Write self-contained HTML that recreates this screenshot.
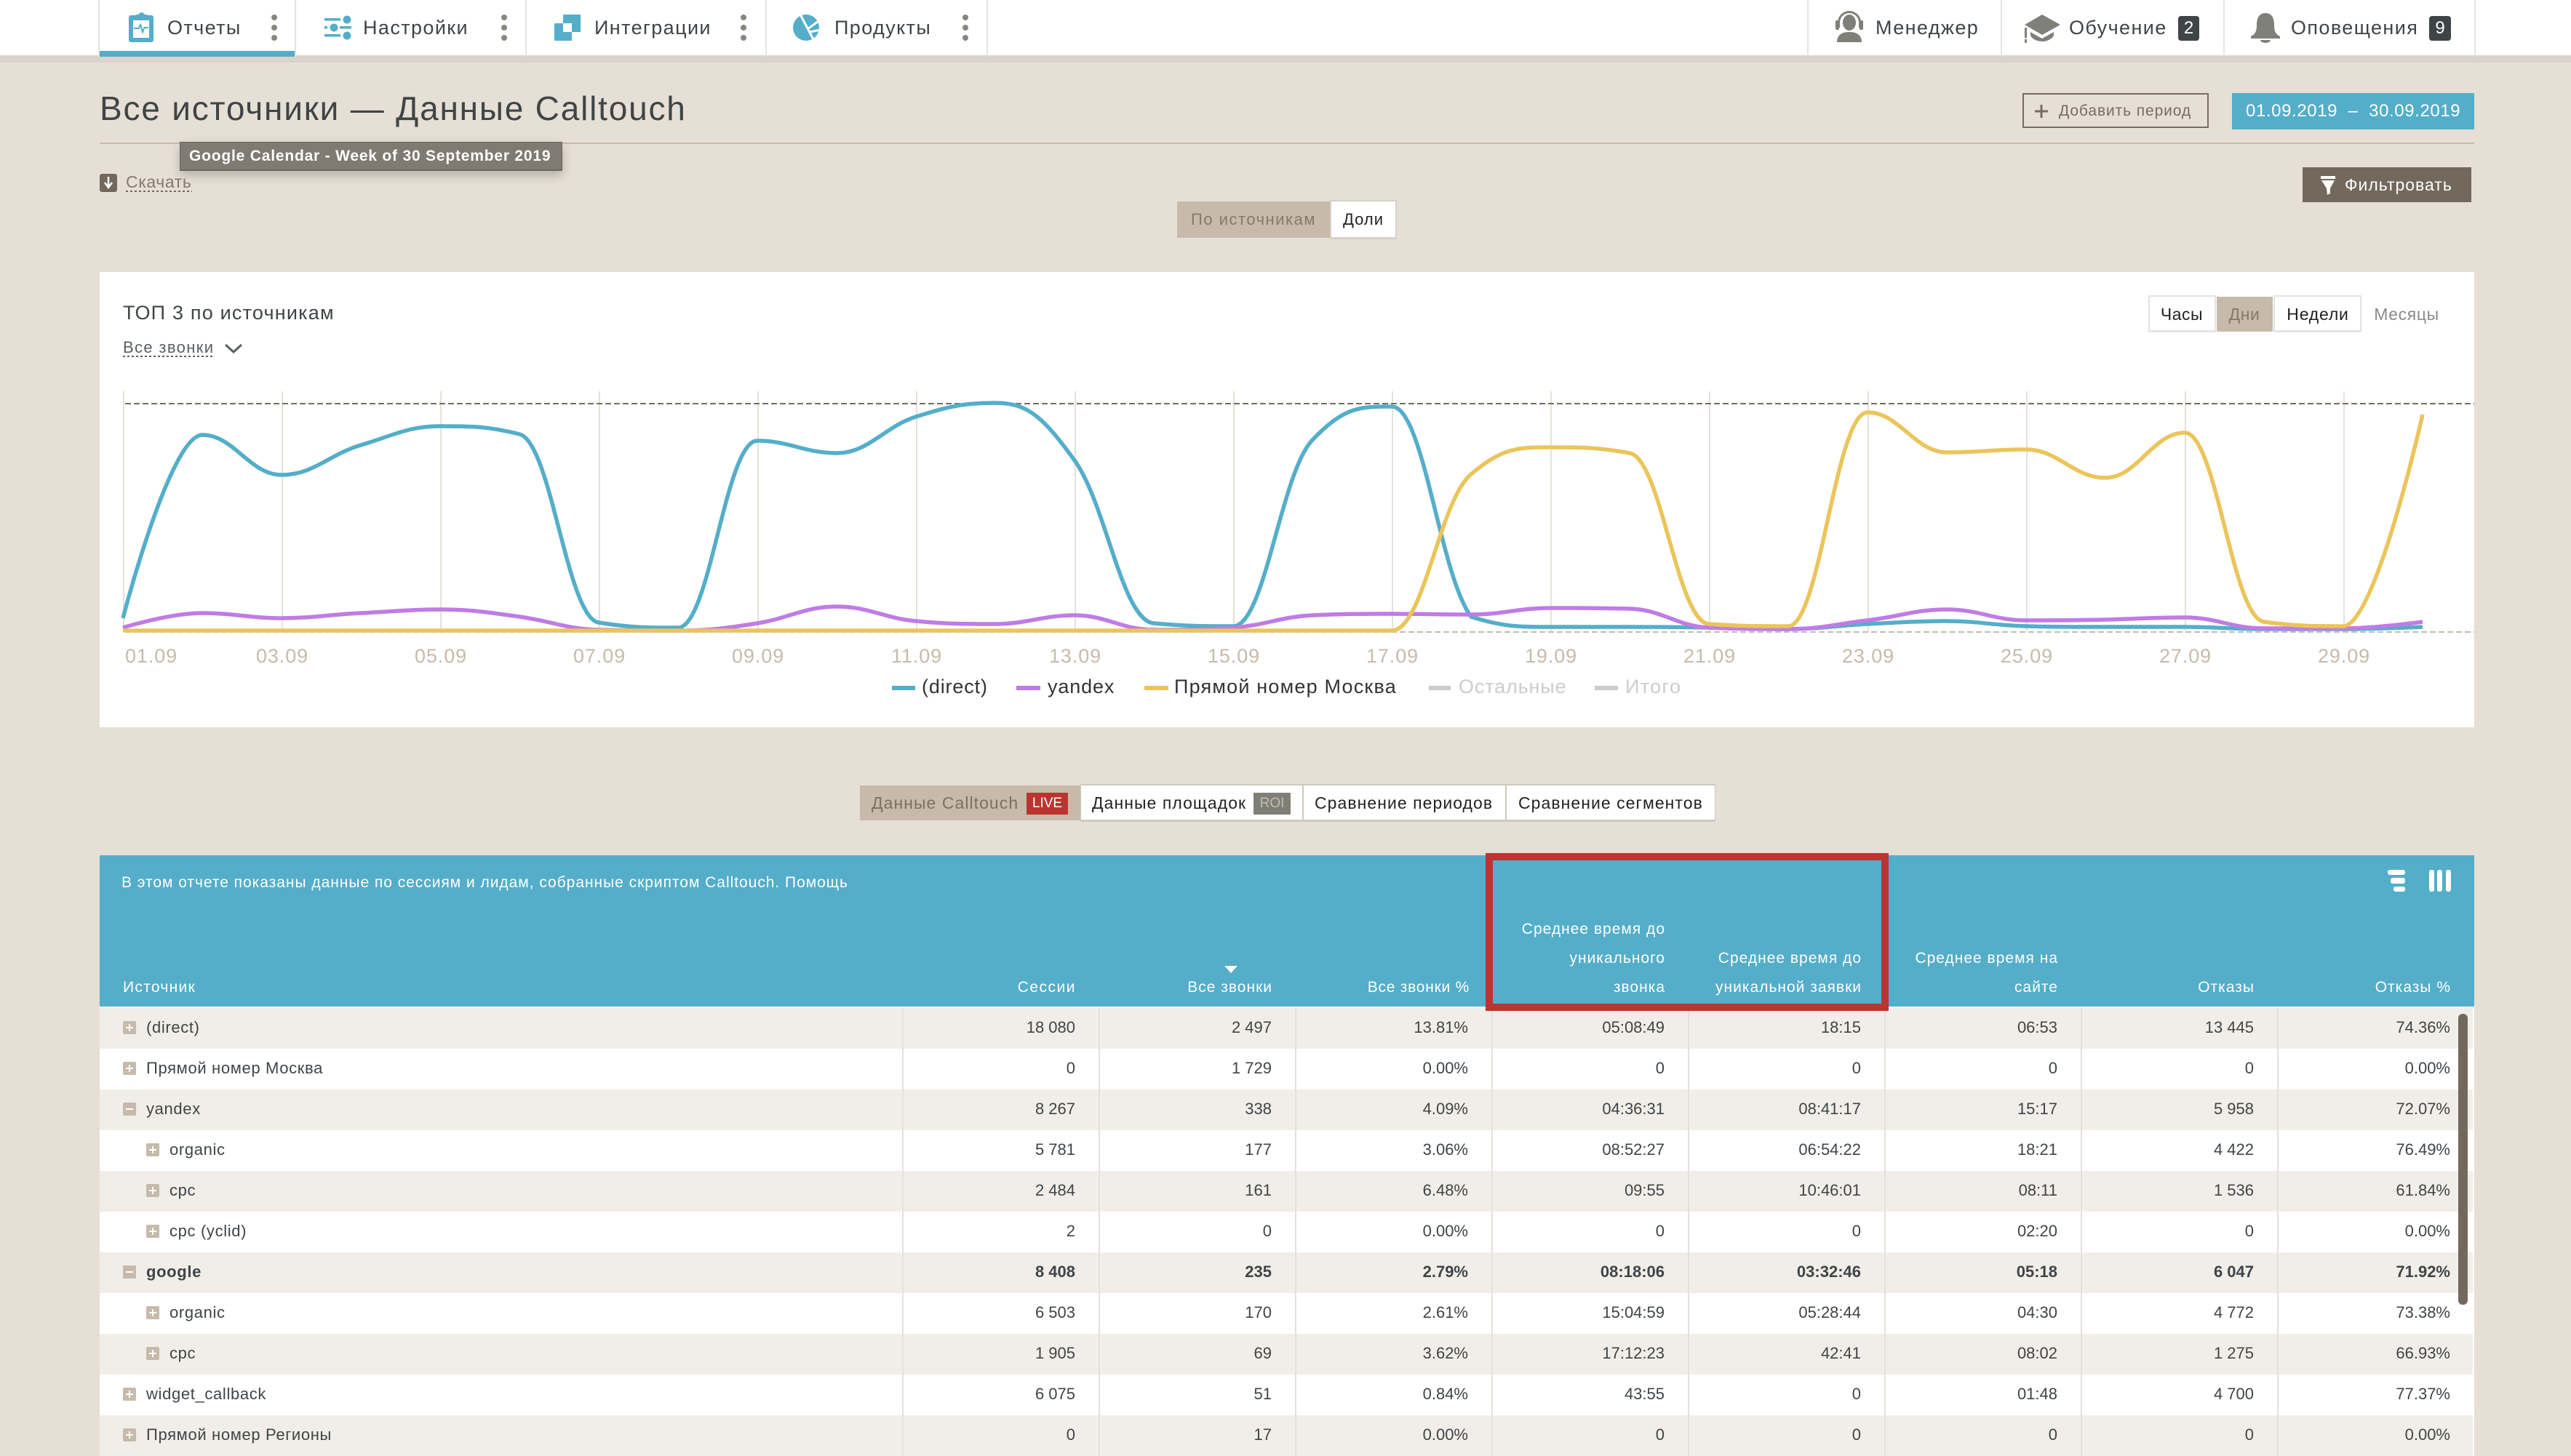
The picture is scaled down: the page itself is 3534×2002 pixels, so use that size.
<!DOCTYPE html>
<html lang="ru"><head><meta charset="utf-8"><title>Все источники — Данные Calltouch</title>
<style>
*{box-sizing:border-box}
html,body{margin:0;padding:0;width:3534px;height:2002px;overflow:hidden;background:#e6dfd5;font-family:"Liberation Sans","Noto Sans CJK SC",sans-serif;color:#3f4447}
.b{position:absolute}
.t{position:absolute;white-space:nowrap;height:40px;line-height:40px}
.r{text-align:right}
.c{text-align:center;transform:translateX(-50%)}
.nav{font-size:27px;letter-spacing:1.4px}
.ax{font-size:27px;color:#c7baaa;top:882px;letter-spacing:.9px}
.lg{font-size:27px;color:#333;top:924px;letter-spacing:.85px}
.h{font-size:21px;color:#fff;letter-spacing:1px}
.tb{font-size:23px;letter-spacing:1.05px}
.row{position:absolute;left:137px;width:3262px;height:56px;display:flex;font-size:22px;line-height:54px;background:#fff}
.row.o{background:#f1eee9}
.row.bd{font-weight:bold}
.row div{width:270px;text-align:right;padding-right:32px;border-left:2px solid #e5e1da}
.row div:last-child{width:269px;padding-right:31px}
.row div.n{width:1103px;border:0;padding:0 0 0 32px;text-align:left;display:flex;align-items:center}
.row div.n.s{padding-left:64px}
.row div.n b{font-weight:inherit;line-height:52px;letter-spacing:.65px;margin-top:-2px}
.row div.n i{display:block;width:18px;height:18px;background:#c7baaa;border-radius:2px;margin:-2px 14px 0 0;position:relative}
.row div.n i:before{content:"";position:absolute;left:4px;top:8px;width:10px;height:2px;background:#fff}
.row div.n i.p:after{content:"";position:absolute;left:8px;top:4px;width:2px;height:10px;background:#fff}
.tab{position:absolute;top:1078px;height:52px;background:#fff;border:2px solid #cfc9bf;border-bottom-width:3px;border-left-width:1px;border-right-width:1px}
</style></head><body>

<!-- nav -->
<div class="b" style="left:0;top:0;width:3534px;height:76px;background:#fff"></div>
<div class="b" style="left:0;top:76px;width:3534px;height:10px;background:#dad3cb"></div>
<div class="b" style="left:137px;top:70px;width:268px;height:8px;background:#54aec9"></div>

<!-- panels -->
<div class="b" style="left:137px;top:196px;width:3264px;height:2px;background:#c7bbab"></div>
<div class="b" style="left:137px;top:374px;width:3264px;height:626px;background:#fff"></div>
<div class="b" style="left:3068px;top:128px;width:333px;height:50px;background:#54aec9"></div>
<div class="b" style="left:2780px;top:128px;width:256px;height:48px;border:2px solid #756d60"></div>
<div class="b" style="left:3165px;top:230px;width:232px;height:48px;background:#72695c"></div>

<!-- toggles -->
<div class="b" style="left:1618px;top:277px;width:210px;height:50px;background:#c7baaa"></div>
<div class="b" style="left:1828px;top:275px;width:92px;height:54px;background:#fff;border:2px solid #d6d1c8;border-bottom-width:3px"></div>
<div class="b" style="left:2953px;top:406px;width:93px;height:51px;background:#fff;border:2px solid #e3e3e3;border-bottom-width:3px"></div>
<div class="b" style="left:3047px;top:408px;width:77px;height:48px;background:#c7baaa"></div>
<div class="b" style="left:3125px;top:406px;width:121px;height:51px;background:#fff;border:2px solid #e3e3e3;border-bottom-width:3px"></div>

<!-- report tabs -->
<div class="b" style="left:1182px;top:1080px;width:303px;height:48px;background:#c7baaa"></div>
<div class="tab" style="left:1485px;width:306px"></div>
<div class="tab" style="left:1791px;width:279px"></div>
<div class="tab" style="left:2070px;width:288px"></div>
<div class="b" style="left:1411px;top:1090px;width:57px;height:30px;background:#bb3530"></div>
<div class="b" style="left:1723px;top:1090px;width:51px;height:30px;background:#7f7f78"></div>

<!-- table header -->
<div class="b" style="left:137px;top:1176px;width:3264px;height:208px;background:#54aec9"></div>
<div class="b" style="left:137px;top:1384px;width:3264px;height:618px;background:#fff"></div>

<!-- rows -->
<div class="row o" style="top:1386px"><div class="n"><i class="p"></i><b>(direct)</b></div><div>18 080</div><div>2 497</div><div>13.81%</div><div>05:08:49</div><div>18:15</div><div>06:53</div><div>13 445</div><div>74.36%</div></div>
<div class="row" style="top:1442px"><div class="n"><i class="p"></i><b>Прямой номер Москва</b></div><div>0</div><div>1 729</div><div>0.00%</div><div>0</div><div>0</div><div>0</div><div>0</div><div>0.00%</div></div>
<div class="row o" style="top:1498px"><div class="n"><i></i><b>yandex</b></div><div>8 267</div><div>338</div><div>4.09%</div><div>04:36:31</div><div>08:41:17</div><div>15:17</div><div>5 958</div><div>72.07%</div></div>
<div class="row" style="top:1554px"><div class="n s"><i class="p"></i><b>organic</b></div><div>5 781</div><div>177</div><div>3.06%</div><div>08:52:27</div><div>06:54:22</div><div>18:21</div><div>4 422</div><div>76.49%</div></div>
<div class="row o" style="top:1610px"><div class="n s"><i class="p"></i><b>cpc</b></div><div>2 484</div><div>161</div><div>6.48%</div><div>09:55</div><div>10:46:01</div><div>08:11</div><div>1 536</div><div>61.84%</div></div>
<div class="row" style="top:1666px"><div class="n s"><i class="p"></i><b>cpc (yclid)</b></div><div>2</div><div>0</div><div>0.00%</div><div>0</div><div>0</div><div>02:20</div><div>0</div><div>0.00%</div></div>
<div class="row o bd" style="top:1722px"><div class="n"><i></i><b>google</b></div><div>8 408</div><div>235</div><div>2.79%</div><div>08:18:06</div><div>03:32:46</div><div>05:18</div><div>6 047</div><div>71.92%</div></div>
<div class="row" style="top:1778px"><div class="n s"><i class="p"></i><b>organic</b></div><div>6 503</div><div>170</div><div>2.61%</div><div>15:04:59</div><div>05:28:44</div><div>04:30</div><div>4 772</div><div>73.38%</div></div>
<div class="row o" style="top:1834px"><div class="n s"><i class="p"></i><b>cpc</b></div><div>1 905</div><div>69</div><div>3.62%</div><div>17:12:23</div><div>42:41</div><div>08:02</div><div>1 275</div><div>66.93%</div></div>
<div class="row" style="top:1890px"><div class="n"><i class="p"></i><b>widget_callback</b></div><div>6 075</div><div>51</div><div>0.84%</div><div>43:55</div><div>0</div><div>01:48</div><div>4 700</div><div>77.37%</div></div>
<div class="row o" style="top:1946px"><div class="n"><i class="p"></i><b>Прямой номер Регионы</b></div><div>0</div><div>17</div><div>0.00%</div><div>0</div><div>0</div><div>0</div><div>0</div><div>0.00%</div></div>

<!-- scrollbar -->
<div class="b" style="left:3379px;top:1394px;width:13px;height:400px;background:#72695c;border-radius:6px"></div>

<!-- graphics -->
<svg class="b" style="left:0;top:0" width="3534" height="2002" viewBox="0 0 3534 2002" fill="none">
 <!-- nav dividers -->
 <g fill="#e6e4e0">
  <rect x="135" y="0" width="2" height="78"/><rect x="405" y="0" width="2" height="78"/><rect x="722" y="0" width="2" height="78"/><rect x="1052" y="0" width="2" height="78"/><rect x="1356" y="0" width="2" height="78"/>
  <rect x="2484" y="0" width="2" height="78"/><rect x="2750" y="0" width="2" height="78"/><rect x="3056" y="0" width="2" height="78"/><rect x="3401" y="0" width="2" height="78"/>
 </g>
 <!-- dots -->
 <g fill="#878780">
  <circle cx="377" cy="24" r="4"/><circle cx="377" cy="38" r="4"/><circle cx="377" cy="52" r="4"/>
  <circle cx="693" cy="24" r="4"/><circle cx="693" cy="38" r="4"/><circle cx="693" cy="52" r="4"/>
  <circle cx="1022" cy="24" r="4"/><circle cx="1022" cy="38" r="4"/><circle cx="1022" cy="52" r="4"/>
  <circle cx="1327" cy="24" r="4"/><circle cx="1327" cy="38" r="4"/><circle cx="1327" cy="52" r="4"/>
 </g>
 <!-- report icon -->
 <rect x="177" y="21" width="34" height="37" rx="3" fill="#54aec9"/>
 <rect x="183" y="28" width="22" height="24" fill="#fff"/>
 <path d="M186 27V22a2 2 0 0 1 2-2h2.500a4.200 4.200 0 0 1 8 0h2.500a2 2 0 0 1 2 2v5z" fill="#54aec9"/>
 <path d="M184 39h6.500l2.500-5 3 10 2.500-6h5.500" stroke="#54aec9" stroke-width="2"/>
 <!-- settings icon -->
 <g fill="#54aec9">
  <rect x="446" y="25" width="22" height="3.500"/><circle cx="477" cy="27" r="5.500"/>
  <rect x="446" y="36" width="4" height="3.500"/><circle cx="459" cy="38" r="5.500"/><rect x="467" y="36" width="16" height="3.500"/>
  <rect x="446" y="47" width="22" height="3.500"/><circle cx="477" cy="49" r="5.500"/>
 </g>
 <!-- integration icon -->
 <rect x="774" y="20" width="24" height="24" fill="#54aec9"/>
 <rect x="762" y="32" width="24" height="24" fill="#54aec9"/>
 <rect x="774" y="32" width="12" height="12" fill="#fff"/>
 <!-- products icon -->
 <circle cx="1108" cy="38" r="18" fill="#54aec9"/>
 <path d="M1099 18l21 40M1110 40l18-13M1113 44l15-3" stroke="#fff" stroke-width="3"/>
 <!-- manager icon -->
 <g fill="#7f8079">
  <path d="M2525 58c0-10 7-14 17-14s17 4 17 14z"/>
  <path d="M2526 38v-7a16 16 0 0 1 32 0v7h-3v-7a13 13 0 0 0-26 0v7z"/>
  <ellipse cx="2542" cy="31" rx="9" ry="11"/>
  <rect x="2523" y="28" width="5" height="13" rx="2"/><rect x="2556" y="28" width="5" height="13" rx="2"/>
 </g>
 <!-- graduation icon -->
 <g fill="#7f8079">
  <path d="M2783 34l24-14 25 14-25 14z"/>
  <path d="M2791 44l16 9 16-9v5c-3 5-9 8-16 8s-13-3-16-8z"/>
  <rect x="2783" y="38" width="3" height="14"/><rect x="2783" y="54" width="3" height="5"/>
 </g>
 <!-- bell icon -->
 <g fill="#7f8079">
  <path d="M3114 18c-8 0-12 6-12 16 0 9-2 13-8 16v3h40v-3c-6-3-8-7-8-16 0-10-4-16-12-16z"/>
  <path d="M3107 55h14c0 2-3 4-7 4s-7-2-7-4z"/>
 </g>
 <rect x="2994" y="22" width="29" height="34" rx="4" fill="#3f4447"/>
 <rect x="3339" y="22" width="30" height="34" rx="4" fill="#3f4447"/>
 <!-- plus -->
 <path d="M2806 144v18M2797 153h18" stroke="#756d60" stroke-width="3"/>
 <!-- funnel -->
 <path d="M3190 242h20v4h-20zM3191 248h18l-6 11v7l-4 2-1-9z" fill="#fff"/>
 <!-- download -->
 <rect x="137" y="239" width="24" height="25" rx="3" fill="#72695c"/>
 <path d="M149 243v13M144 251l5 7 5-7" stroke="#fff" stroke-width="2.500"/>
 <!-- chevron -->
 <path d="M310 474l11 10 11-10" stroke="#5a5f62" stroke-width="3"/>
 <!-- grid -->
 <g fill="#e5e1da">
  <rect x="169" y="538" width="2" height="330"/><rect x="387" y="538" width="2" height="330"/><rect x="605" y="538" width="2" height="330"/><rect x="823" y="538" width="2" height="330"/><rect x="1041" y="538" width="2" height="330"/><rect x="1259" y="538" width="2" height="330"/><rect x="1477" y="538" width="2" height="330"/><rect x="1695" y="538" width="2" height="330"/><rect x="1913" y="538" width="2" height="330"/><rect x="2131" y="538" width="2" height="330"/><rect x="2349" y="538" width="2" height="330"/><rect x="2567" y="538" width="2" height="330"/><rect x="2785" y="538" width="2" height="330"/><rect x="3003" y="538" width="2" height="330"/><rect x="3221" y="538" width="2" height="330"/>
 </g>
 <path d="M172 555H3401" stroke="#756d60" stroke-width="2" stroke-dasharray="8 4"/>
 <path d="M172 869H3401" stroke="#c7bbab" stroke-width="2" stroke-dasharray="8 4"/>
 <!-- series -->
 <path stroke="#54aec9" stroke-width="5.500" d="M169 850C169 850 234 598 278 598C322 598 343 653 387 653C431 653 452 625 496 612C540 599 561 586 605 586C649 586 670 586 714 597C758 608 779 849 823 856C867 863 888 863 932 863C976 863 997 606 1041 606C1085 606 1106 623 1150 623C1194 623 1215 587 1259 573C1303 559 1324 554 1368 554C1412 554 1433 572 1477 633C1521 694 1542 853 1586 857C1630 861 1651 861 1695 861C1739 861 1760 651 1804 605C1848 559 1869 559 1913 559C1957 559 1978 787 2022 848C2066 862 2087 862 2131 862C2175 862 2196 862 2240 862C2284 862 2305 862 2349 863C2393 864 2414 865 2458 865C2502 865 2523 860 2567 858C2611 856 2632 854 2676 854C2720 854 2741 860 2785 861C2829 862 2850 862 2894 862C2938 862 2959 862 3003 862C3047 862 3068 865 3112 865C3156 865 3177 865 3221 865C3265 865 3330 862 3330 862"/>
 <path stroke="#bf7ce5" stroke-width="5.500" d="M169 863C169 863 234 843 278 843C322 843 343 850 387 850C431 850 452 845 496 843C540 841 561 838 605 838C649 838 670 842 714 848C758 854 779 865 823 866C867 867 888 867 932 867C976 867 997 864 1041 857C1085 850 1106 834 1150 834C1194 834 1215 850 1259 854C1303 858 1324 858 1368 858C1412 858 1433 846 1477 846C1521 846 1542 866 1586 866C1630 866 1651 866 1695 863C1739 860 1760 848 1804 846C1848 844 1869 844 1913 844C1957 844 1978 845 2022 845C2066 845 2087 836 2131 836C2175 836 2196 836 2240 837C2284 838 2305 861 2349 863C2393 865 2414 865 2458 865C2502 865 2523 858 2567 853C2611 848 2632 838 2676 838C2720 838 2741 853 2785 853C2829 853 2850 853 2894 852C2938 851 2959 849 3003 849C3047 849 3068 864 3112 864C3156 864 3177 864 3221 864C3265 864 3330 855 3330 855"/>
 <path stroke="#ebc55b" stroke-width="5.500" d="M169 867H1913C1957 867 1978 689 2022 652C2066 615 2087 615 2131 615C2175 615 2196 615 2240 623C2284 631 2305 855 2349 858C2393 861 2414 861 2458 861C2502 861 2523 567 2567 567C2611 567 2632 622 2676 622C2720 622 2741 618 2785 618C2829 618 2850 657 2894 657C2938 657 2959 595 3003 595C3047 595 3068 849 3112 855C3156 861 3177 861 3221 861C3265 861 3330 570 3330 570"/>
 <!-- legend swatches -->
 <rect x="1226" y="943" width="32" height="6" fill="#54aec9"/>
 <rect x="1397" y="943" width="33" height="6" fill="#bf7ce5"/>
 <rect x="1573" y="943" width="33" height="6" fill="#ebc55b"/>
 <rect x="1964" y="943" width="30" height="6" fill="#ccc"/>
 <rect x="2192" y="943" width="32" height="6" fill="#ccc"/>
 <!-- dotted underlines -->
 <path d="M173 263H264" stroke="#72695c" stroke-width="2" stroke-dasharray="3 3"/>
 <path d="M169 490H295" stroke="#5a5f62" stroke-width="2" stroke-dasharray="3 3"/>
 <!-- table header icons -->
 <g fill="#fff">
  <rect x="3282" y="1196" width="24" height="7" rx="3"/><rect x="3286" y="1207" width="20" height="8" rx="3"/><rect x="3290" y="1219" width="16" height="7" rx="3"/>
  <rect x="3339" y="1196" width="7" height="30" rx="3"/><rect x="3350" y="1196" width="7" height="30" rx="3"/><rect x="3362" y="1196" width="7" height="30" rx="3"/>
  <path d="M1683 1328h18l-9 10z"/>
 </g>
 <!-- red box -->
 <rect x="2047" y="1178" width="544" height="207" stroke="#bb3530" stroke-width="10"/>
</svg>

<!-- nav text -->
<div class="t nav" style="left:230px;top:18px">Отчеты</div>
<div class="t nav" style="left:499px;top:18px">Настройки</div>
<div class="t nav" style="left:817px;top:18px">Интеграции</div>
<div class="t nav" style="left:1147px;top:18px">Продукты</div>
<div class="t nav" style="left:2578px;top:18px">Менеджер</div>
<div class="t nav" style="left:2844px;top:18px">Обучение</div>
<div class="t nav" style="left:3149px;top:18px">Оповещения</div>
<div class="t" style="left:2994px;top:19px;width:29px;text-align:center;color:#fff;font-size:24px">2</div>
<div class="t" style="left:3339px;top:19px;width:30px;text-align:center;color:#fff;font-size:24px">9</div>

<!-- title row -->
<div class="t" style="left:137px;top:124px;font-size:46px;height:50px;line-height:50px;letter-spacing:1.8px">Все источники — Данные Calltouch</div>
<div class="t" style="left:2830px;top:133px;font-size:21px;color:#756d60;letter-spacing:.9px">Добавить период</div>
<div class="t" style="left:3087px;top:133px;font-size:24px;color:#fff;letter-spacing:.6px">01.09.2019 &nbsp;–&nbsp; 30.09.2019</div>
<div class="t" style="left:3223px;top:234px;font-size:23px;color:#fff;letter-spacing:1px">Фильтровать</div>

<!-- tooltip -->
<div class="b" style="left:247px;top:195px;width:526px;height:40px;background:#7f7a72;border:1px solid #6c6860;border-bottom-width:2px;box-shadow:0 6px 14px rgba(0,0,0,.22)"></div>
<div class="t" style="left:260px;top:195px;font-size:21px;font-weight:bold;color:#fff;letter-spacing:.8px">Google Calendar - Week of 30 September 2019</div>

<div class="t" style="left:173px;top:230px;font-size:23px;color:#85796c;letter-spacing:.6px">Скачать</div>
<div class="t c" style="left:1723px;top:282px;font-size:22px;color:#85796c;letter-spacing:1.5px">По источникам</div>
<div class="t c" style="left:1874px;top:282px;font-size:22px;color:#222;letter-spacing:1px">Доли</div>

<!-- chart text -->
<div class="t" style="left:169px;top:410px;font-size:27px;letter-spacing:1.2px">ТОП 3 по источникам</div>
<div class="t" style="left:169px;top:458px;font-size:22px;color:#5a5f62;letter-spacing:1.35px">Все звонки</div>
<div class="t c" style="left:2999px;top:412px;font-size:23px;color:#222;letter-spacing:.5px">Часы</div>
<div class="t c" style="left:3085px;top:412px;font-size:23px;color:#85796c;letter-spacing:.5px">Дни</div>
<div class="t c" style="left:3186px;top:412px;font-size:23px;color:#222;letter-spacing:.8px">Недели</div>
<div class="t c" style="left:3308px;top:412px;font-size:23px;color:#8a8a8a;letter-spacing:.6px">Месяцы</div>

<div class="t ax" style="left:172px">01.09</div>
<div class="t ax c" style="left:388px">03.09</div>
<div class="t ax c" style="left:606px">05.09</div>
<div class="t ax c" style="left:824px">07.09</div>
<div class="t ax c" style="left:1042px">09.09</div>
<div class="t ax c" style="left:1260px">11.09</div>
<div class="t ax c" style="left:1478px">13.09</div>
<div class="t ax c" style="left:1696px">15.09</div>
<div class="t ax c" style="left:1914px">17.09</div>
<div class="t ax c" style="left:2132px">19.09</div>
<div class="t ax c" style="left:2350px">21.09</div>
<div class="t ax c" style="left:2568px">23.09</div>
<div class="t ax c" style="left:2786px">25.09</div>
<div class="t ax c" style="left:3004px">27.09</div>
<div class="t ax c" style="left:3222px">29.09</div>

<div class="t lg" style="left:1267px">(direct)</div>
<div class="t lg" style="left:1440px">yandex</div>
<div class="t lg" style="left:1614px;letter-spacing:1.2px">Прямой номер Москва</div>
<div class="t lg" style="left:2005px;color:#ccc">Остальные</div>
<div class="t lg" style="left:2234px;color:#ccc;letter-spacing:1.3px">Итого</div>

<!-- tabs text -->
<div class="t tb" style="left:1198px;top:1084px;color:#7a7064">Данные Calltouch</div>
<div class="t" style="left:1411px;top:1085px;width:57px;text-align:center;font-size:19px;color:#fff">LIVE</div>
<div class="t tb" style="left:1501px;top:1084px;color:#222">Данные площадок</div>
<div class="t" style="left:1723px;top:1085px;width:51px;text-align:center;font-size:19px;color:#c7baaa">ROI</div>
<div class="t tb" style="left:1807px;top:1084px;color:#222">Сравнение периодов</div>
<div class="t tb" style="left:2087px;top:1084px;color:#222">Сравнение сегментов</div>

<!-- table header text -->
<div class="t h" style="left:167px;top:1194px;letter-spacing:.97px">В этом отчете показаны данные по сессиям и лидам, собранные скриптом Calltouch. Помощь</div>
<div class="t h" style="left:169px;top:1338px;letter-spacing:1.3px">Источник</div>
<div class="t h r" style="right:2055px;top:1338px;letter-spacing:1.5px">Сессии</div>
<div class="t h r" style="right:1785px;top:1338px">Все звонки</div>
<div class="t h r" style="right:1514px;top:1338px;letter-spacing:.75px">Все звонки %</div>
<div class="t h r" style="right:1245px;top:1258px">Среднее время до</div>
<div class="t h r" style="right:1245px;top:1298px">уникального</div>
<div class="t h r" style="right:1245px;top:1338px">звонка</div>
<div class="t h r" style="right:975px;top:1298px">Среднее время до</div>
<div class="t h r" style="right:975px;top:1338px">уникальной заявки</div>
<div class="t h r" style="right:705px;top:1298px">Среднее время на</div>
<div class="t h r" style="right:705px;top:1338px">сайте</div>
<div class="t h r" style="right:435px;top:1338px">Отказы</div>
<div class="t h r" style="right:165px;top:1338px">Отказы %</div>

</body></html>
